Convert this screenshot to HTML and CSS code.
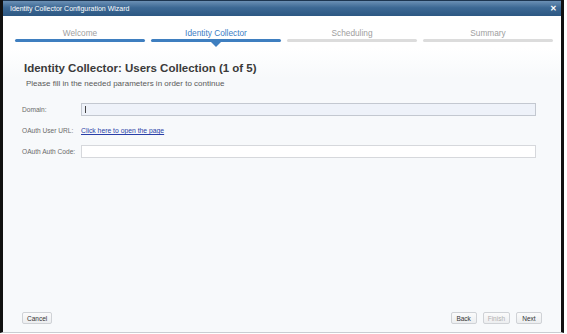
FILE: index.html
```html
<!DOCTYPE html>
<html lang="en">
<head>
    <meta charset="UTF-8">
    <title>Identity Collector Configuration Wizard</title>
    <link rel="stylesheet" href="styles.css">
</head>
<body>
    <div class="window">
        <div class="titlebar">
            <span class="title">Identity Collector Configuration Wizard</span>
            <span class="close">&#x2715;</span>
        </div>
        <div class="steps">
            <div class="step done">
                <div class="step-label">Welcome</div>
                <div class="step-bar"></div>
            </div>
            <div class="step active">
                <div class="step-label">Identity Collector</div>
                <div class="step-bar"></div>
            </div>
            <div class="step">
                <div class="step-label">Scheduling</div>
                <div class="step-bar"></div>
            </div>
            <div class="step">
                <div class="step-label">Summary</div>
                <div class="step-bar"></div>
            </div>
        </div>
        <div class="content">
            <h1 class="heading">Identity Collector: Users Collection (1 of 5)</h1>
            <p class="subtitle">Please fill in the needed parameters in order to continue</p>
            <div class="form">
                <label for="domain">Domain:</label>
                <div class="field focused"><span class="caret"></span></div>
                <label>OAuth User URL:</label>
                <a class="link" href="#">Click here to open the page</a>
                <label for="code">OAuth Auth Code:</label>
                <div class="field"></div>
            </div>
        </div>
        <div class="footer">
            <button class="btn">Cancel</button>
            <div class="nav-buttons">
                <button class="btn">Back</button>
                <button class="btn disabled">Finish</button>
                <button class="btn">Next</button>
            </div>
        </div>
    </div>
</body>
</html>
```

FILE: styles.css
```css
html, body {
    margin: 0;
    padding: 0;
    background: #ffffff;
}
body {
    font-family: 'Liberation Sans', Arial, sans-serif;
    width: 567px;
    height: 334px;
    overflow: hidden;
}
.window {
    width: 558px;
    height: 332px;
    border-left: 3px solid #111;
    border-right: 3px solid #111;
    border-bottom: 1px solid #c9cdd2;
    background: #f7f9fb;
    display: flex;
    flex-direction: column;
}
.titlebar {
    height: 16px;
    background: linear-gradient(#6b90b5, #3c6894 45%, #2d5883);
    border-top: 1px solid #1d3550;
    box-sizing: border-box;
    display: flex;
    align-items: center;
    justify-content: space-between;
    padding: 0 4px 0 7px;
}
.title {
    color: #ffffff;
    font-size: 7px;
}
.close {
    color: #ffffff;
    font-size: 8px;
    font-weight: bold;
}
.steps {
    background: #ffffff;
    display: flex;
    gap: 6px;
    padding: 12px 8px 0 12px;
    height: 32px;
    box-sizing: border-box;
}
.step {
    width: 130px;
    position: relative;
}
.step-label {
    text-align: center;
    font-size: 8.3px;
    line-height: 10px;
    color: #9e9e9e;
}
.step-bar {
    margin-top: 1px;
    height: 3px;
    border-radius: 2px;
    background: #dcdcdc;
}
.step.done .step-bar,
.step.active .step-bar {
    background: #3f7fc0;
}
.step.active .step-label {
    color: #3a7cc4;
}
.step.active::after {
    content: '';
    position: absolute;
    left: 60px;
    top: 14px;
    border-left: 5px solid transparent;
    border-right: 5px solid transparent;
    border-top: 5px solid #3f7fc0;
}
.content {
    background: linear-gradient(#ffffff, #f7f9fb 30px);
    padding: 13px 25px 0 19px;
}
.heading {
    margin: 0 0 0 2px;
    font-size: 11.5px;
    line-height: 14px;
    font-weight: bold;
    color: #3a3a3a;
}
.subtitle {
    margin: 4px 0 0 4px;
    font-size: 8px;
    line-height: 10px;
    color: #5a5a5a;
}
.form {
    margin-top: 14px;
    display: grid;
    grid-template-columns: 59px 1fr;
    grid-auto-rows: 13px;
    row-gap: 8px;
    align-items: center;
}
.form label {
    font-size: 6.6px;
    color: #6a6a6a;
}
.field {
    height: 13px;
    box-sizing: border-box;
    border: 1px solid #d6d8dc;
    background: #ffffff;
    display: flex;
    align-items: center;
}
.field.focused {
    background: #eef2f9;
    border-color: #c3c8d0;
}
.caret {
    width: 1px;
    height: 7px;
    margin-left: 3px;
    background: #444;
}
.link {
    font-size: 6.8px;
    color: #2a3fa8;
    text-decoration: underline;
}
.footer {
    margin-top: auto;
    display: flex;
    justify-content: space-between;
    padding: 0 19px 8px 19px;
}
.nav-buttons {
    display: flex;
    gap: 6px;
}
.btn {
    font-family: 'Liberation Sans', Arial, sans-serif;
    font-size: 6.5px;
    height: 12px;
    padding: 0 4px;
    min-width: 26px;
    border: 1px solid #cfd2d6;
    border-radius: 2px;
    background: linear-gradient(#fbfbfb, #eceef0);
    color: #333;
    cursor: pointer;
}
.btn.disabled {
    color: #b0b0b0;
}
```
